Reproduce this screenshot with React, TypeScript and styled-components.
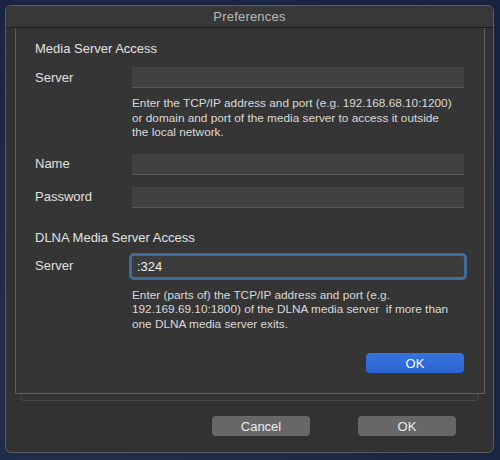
import styled, { createGlobalStyle } from "styled-components";

const GlobalStyle = createGlobalStyle`
  html, body {
    margin: 0;
    padding: 0;
    background: #1c2946;
  }
  body {
    font-family: "Liberation Sans", Arial, sans-serif;
  }
`;

/** 환경설정 창 */
const App = () => {
  return (
    <>
      <GlobalStyle />
      <Desktop>
        <Window>
          <TitleBar>Preferences</TitleBar>
          <SheetArea>
            <Sheet>
              <SectionTitle>Media Server Access</SectionTitle>
              <FieldRow $top={10}>
                <Label>Server</Label>
                <Field />
              </FieldRow>
              <Help $top={8}>
                Enter the TCP/IP address and port (e.g. 192.168.68.10:1200)
                <br />
                or domain and port of the media server to access it outside
                <br />
                the local network.
              </Help>
              <FieldRow $top={14}>
                <Label>Name</Label>
                <Field />
              </FieldRow>
              <FieldRow $top={12}>
                <Label>Password</Label>
                <Field />
              </FieldRow>

              <SectionTitle $top={22}>DLNA Media Server Access</SectionTitle>
              <FieldRow $top={7}>
                <Label>Server</Label>
                <Field $focused>:324</Field>
              </FieldRow>
              <Help $top={8}>
                Enter (parts of) the TCP/IP address and port (e.g.
                <br />
                192.169.69.10:1800) of the DLNA media server&nbsp; if more than
                <br />
                one DLNA media server exits.
              </Help>
              <SheetFooter>
                <PrimaryButton>OK</PrimaryButton>
              </SheetFooter>
            </Sheet>
            <PanelEdge />
          </SheetArea>
          <Footer>
            <Button>Cancel</Button>
            <Button>OK</Button>
          </Footer>
        </Window>
      </Desktop>
    </>
  );
};

export default App;

const Desktop = styled.div`
  width: 500px;
  height: 460px;
  box-sizing: border-box;
  padding: 5px 6px 7px 5px;
  background: radial-gradient(ellipse at 20% 80%, #22304d 0%, #1a2744 60%, #172340 100%);
`;

const Window = styled.div`
  height: 100%;
  box-sizing: border-box;
  display: flex;
  flex-direction: column;
  background: #323232;
  border: 1px solid #5b5b5b;
  border-radius: 6px;
  overflow: hidden;
`;

const TitleBar = styled.div`
  height: 21px;
  flex: none;
  display: flex;
  align-items: center;
  justify-content: center;
  background: #383838;
  border-bottom: 1px solid #1b1b1b;
  color: #b9b9b9;
  font-size: 13px;
  letter-spacing: 0.2px;
`;

const SheetArea = styled.div`
  padding: 0 8px 0 9px;
  display: flex;
  flex-direction: column;
`;

const Sheet = styled.div`
  height: 366px;
  box-sizing: border-box;
  display: flex;
  flex-direction: column;
  padding: 13px 20px 0 19px;
  background: #353535;
  border: 1px solid #5e5e5e;
  border-top: none;
`;

const PanelEdge = styled.div`
  height: 6px;
  margin: 0 6px 0 5px;
  border: 1px solid #474747;
  border-top: none;
  border-radius: 0 0 4px 4px;
  background: #333;
`;

const SectionTitle = styled.div<{ $top?: number }>`
  margin-top: ${(p) => p.$top ?? 0}px;
  font-size: 13px;
  line-height: 16px;
  color: #e2e2e2;
`;

const FieldRow = styled.div<{ $top?: number }>`
  margin-top: ${(p) => p.$top ?? 0}px;
  display: grid;
  grid-template-columns: 97px 1fr;
  align-items: center;
`;

const Label = styled.div`
  font-size: 13px;
  color: #e0e0e0;
  padding-bottom: 1px;
`;

const Field = styled.div<{ $focused?: boolean }>`
  height: 21px;
  box-sizing: border-box;
  padding: 0 5px;
  display: flex;
  align-items: center;
  font-size: 13px;
  color: #f0f0f0;
  background: #414141;
  border-bottom: 1px solid #585858;
  ${(p) =>
    p.$focused &&
    `
    margin: 3px 0;
    background: #3c3c3c;
    border-bottom: none;
    border-radius: 2px;
    box-shadow: 0 0 0 3px #3f6c9c;
  `}
`;

const Help = styled.div<{ $top?: number }>`
  margin-top: ${(p) => p.$top ?? 0}px;
  margin-left: 97px;
  font-size: 11.8px;
  line-height: 14.5px;
  color: #dadada;
  white-space: nowrap;
`;

const SheetFooter = styled.div`
  margin-top: auto;
  padding-bottom: 20px;
  display: flex;
  justify-content: flex-end;
`;

const PrimaryButton = styled.button`
  width: 98px;
  height: 20px;
  border: none;
  border-radius: 4px;
  background: linear-gradient(#3673e0, #2c64d2);
  color: #fff;
  font-family: "Liberation Sans", Arial, sans-serif;
  font-size: 13px;
`;

const Footer = styled.div`
  margin-top: auto;
  padding: 0 37px 16px 0;
  display: flex;
  justify-content: flex-end;
  gap: 48px;
`;

const Button = styled.button`
  width: 98px;
  height: 20px;
  border: none;
  border-radius: 4px;
  background: #676767;
  color: #ececec;
  font-family: "Liberation Sans", Arial, sans-serif;
  font-size: 13px;
`;
